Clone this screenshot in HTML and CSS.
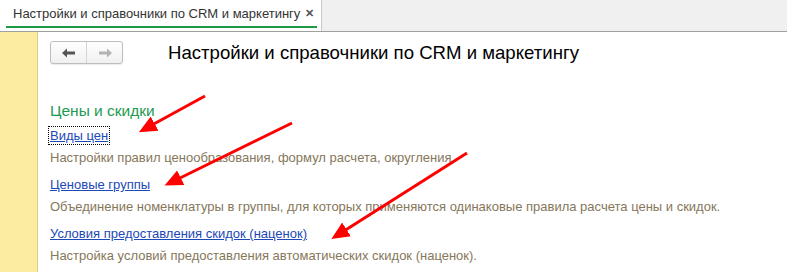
FILE: index.html
```html
<!DOCTYPE html>
<html lang="ru">
<head>
<meta charset="utf-8">
<link rel="stylesheet" href="styles.css">
</head>
<body>
<div class="tabbar">
  <div class="tab">
    <span class="tab-title">Настройки и справочники по CRM и маркетингу</span>
    <span class="tab-close">&#x2715;</span>
  </div>
</div>
<div class="workspace">
  <div class="strip"></div>
  <div class="main">
    <div class="toolbar">
      <div class="nav">
        <div class="nav-btn">
          <svg width="16" height="12" viewBox="0 0 16 12"><path d="M1 6 L6 1.5 L6 4.5 L14 4.5 L14 7.5 L6 7.5 L6 10.5 Z" fill="#555"/></svg>
        </div>
        <div class="nav-btn">
          <svg width="16" height="12" viewBox="0 0 16 12"><path d="M15 6 L10 1.5 L10 4.5 L2 4.5 L2 7.5 L10 7.5 L10 10.5 Z" fill="#b4b4b4"/></svg>
        </div>
      </div>
      <div class="page-title">Настройки и справочники по CRM и маркетингу</div>
    </div>
    <div class="group-title">Цены и скидки</div>
    <div class="item">
      <a class="link focused" href="#">Виды цен</a>
      <div class="desc">Настройки правил ценообразования, формул расчета, округления.</div>
    </div>
    <div class="item">
      <a class="link" href="#">Ценовые группы</a>
      <div class="desc">Объединение номенклатуры в группы, для которых применяются одинаковые правила расчета цены и скидок.</div>
    </div>
    <div class="item">
      <a class="link" href="#">Условия предоставления скидок (наценок)</a>
      <div class="desc">Настройка условий предоставления автоматических скидок (наценок).</div>
    </div>
  </div>
</div>
<svg class="arrows" width="787" height="272" viewBox="0 0 787 272">
  <defs>
    <marker id="head" markerWidth="6" markerHeight="6" refX="1" refY="3" orient="auto" markerUnits="strokeWidth">
      <path d="M0 0.3 L6 3 L0 5.7 Z" fill="#ff0000"/>
    </marker>
  </defs>
  <line x1="205" y1="96" x2="152" y2="125" stroke="#ff0000" stroke-width="3" marker-end="url(#head)"/>
  <line x1="292" y1="123" x2="178" y2="179" stroke="#ff0000" stroke-width="3" marker-end="url(#head)"/>
  <line x1="467" y1="153" x2="344" y2="231" stroke="#ff0000" stroke-width="3" marker-end="url(#head)"/>
</svg>
</body>
</html>
```
FILE: styles.css
```css
html, body {
  margin: 0;
  padding: 0;
  width: 787px;
  height: 272px;
  overflow: hidden;
  background: #ffffff;
  font-family: "Liberation Sans", Arial, sans-serif;
}
body {
  position: relative;
}
.tabbar {
  height: 31px;
  background: #f0f0f0;
  border-bottom: 1px solid #a0a0a0;
  display: flex;
}
.tab {
  width: 322px;
  flex: none;
  background: #ffffff;
  border-right: 1px solid #c8c8c8;
  box-sizing: border-box;
  position: relative;
  display: flex;
  align-items: center;
  justify-content: space-between;
  padding: 0 7px 4px 13px;
  font-size: 13px;
  color: #333333;
}
.tab::after {
  content: "";
  position: absolute;
  left: 6px;
  right: 4px;
  bottom: 3px;
  height: 2px;
  background: #1f9a47;
}
.tab-title {
  white-space: nowrap;
}
.tab-close {
  font-size: 11px;
  font-weight: bold;
  color: #555555;
}
.workspace {
  display: flex;
  height: 240px;
}
.strip {
  width: 37px;
  background: #fbeca2;
  border-right: 1px solid #d8c98c;
  flex: none;
}
.main {
  flex: 1;
  padding: 9px 0 0 12px;
}
.toolbar {
  display: flex;
  align-items: center;
  height: 23px;
}
.nav {
  display: flex;
  width: 73px;
  height: 23px;
  border: 1px solid #bdbdbd;
  border-radius: 3px;
  box-sizing: border-box;
  background: linear-gradient(#ffffff, #f0f0f0);
  box-shadow: 0 1px 1px rgba(0,0,0,0.08);
}
.nav-btn {
  flex: 1;
  display: flex;
  align-items: center;
  justify-content: center;
}
.nav-btn + .nav-btn {
  border-left: 1px solid #d4d4d4;
}
.page-title {
  margin-left: 45px;
  font-size: 18.6px;
  color: #000000;
  white-space: nowrap;
}
.group-title {
  margin-top: 37px;
  font-size: 15.5px;
  color: #1e9a50;
  line-height: 19px;
}
.item {
  display: flex;
  flex-direction: column;
  align-items: flex-start;
}
.link {
  margin-top: 8px;
  font-size: 13px;
  line-height: 15px;
  color: #1c48b8;
  text-decoration: underline;
}
.item + .item .link {
  margin-top: 12px;
}
.link.focused {
  outline: 1px dotted #000000;
  outline-offset: 1px;
}
.desc {
  margin-top: 7px;
  font-size: 13px;
  line-height: 15px;
  color: #86775a;
  white-space: nowrap;
}
.arrows {
  position: absolute;
  left: 0;
  top: 0;
  pointer-events: none;
}
```
